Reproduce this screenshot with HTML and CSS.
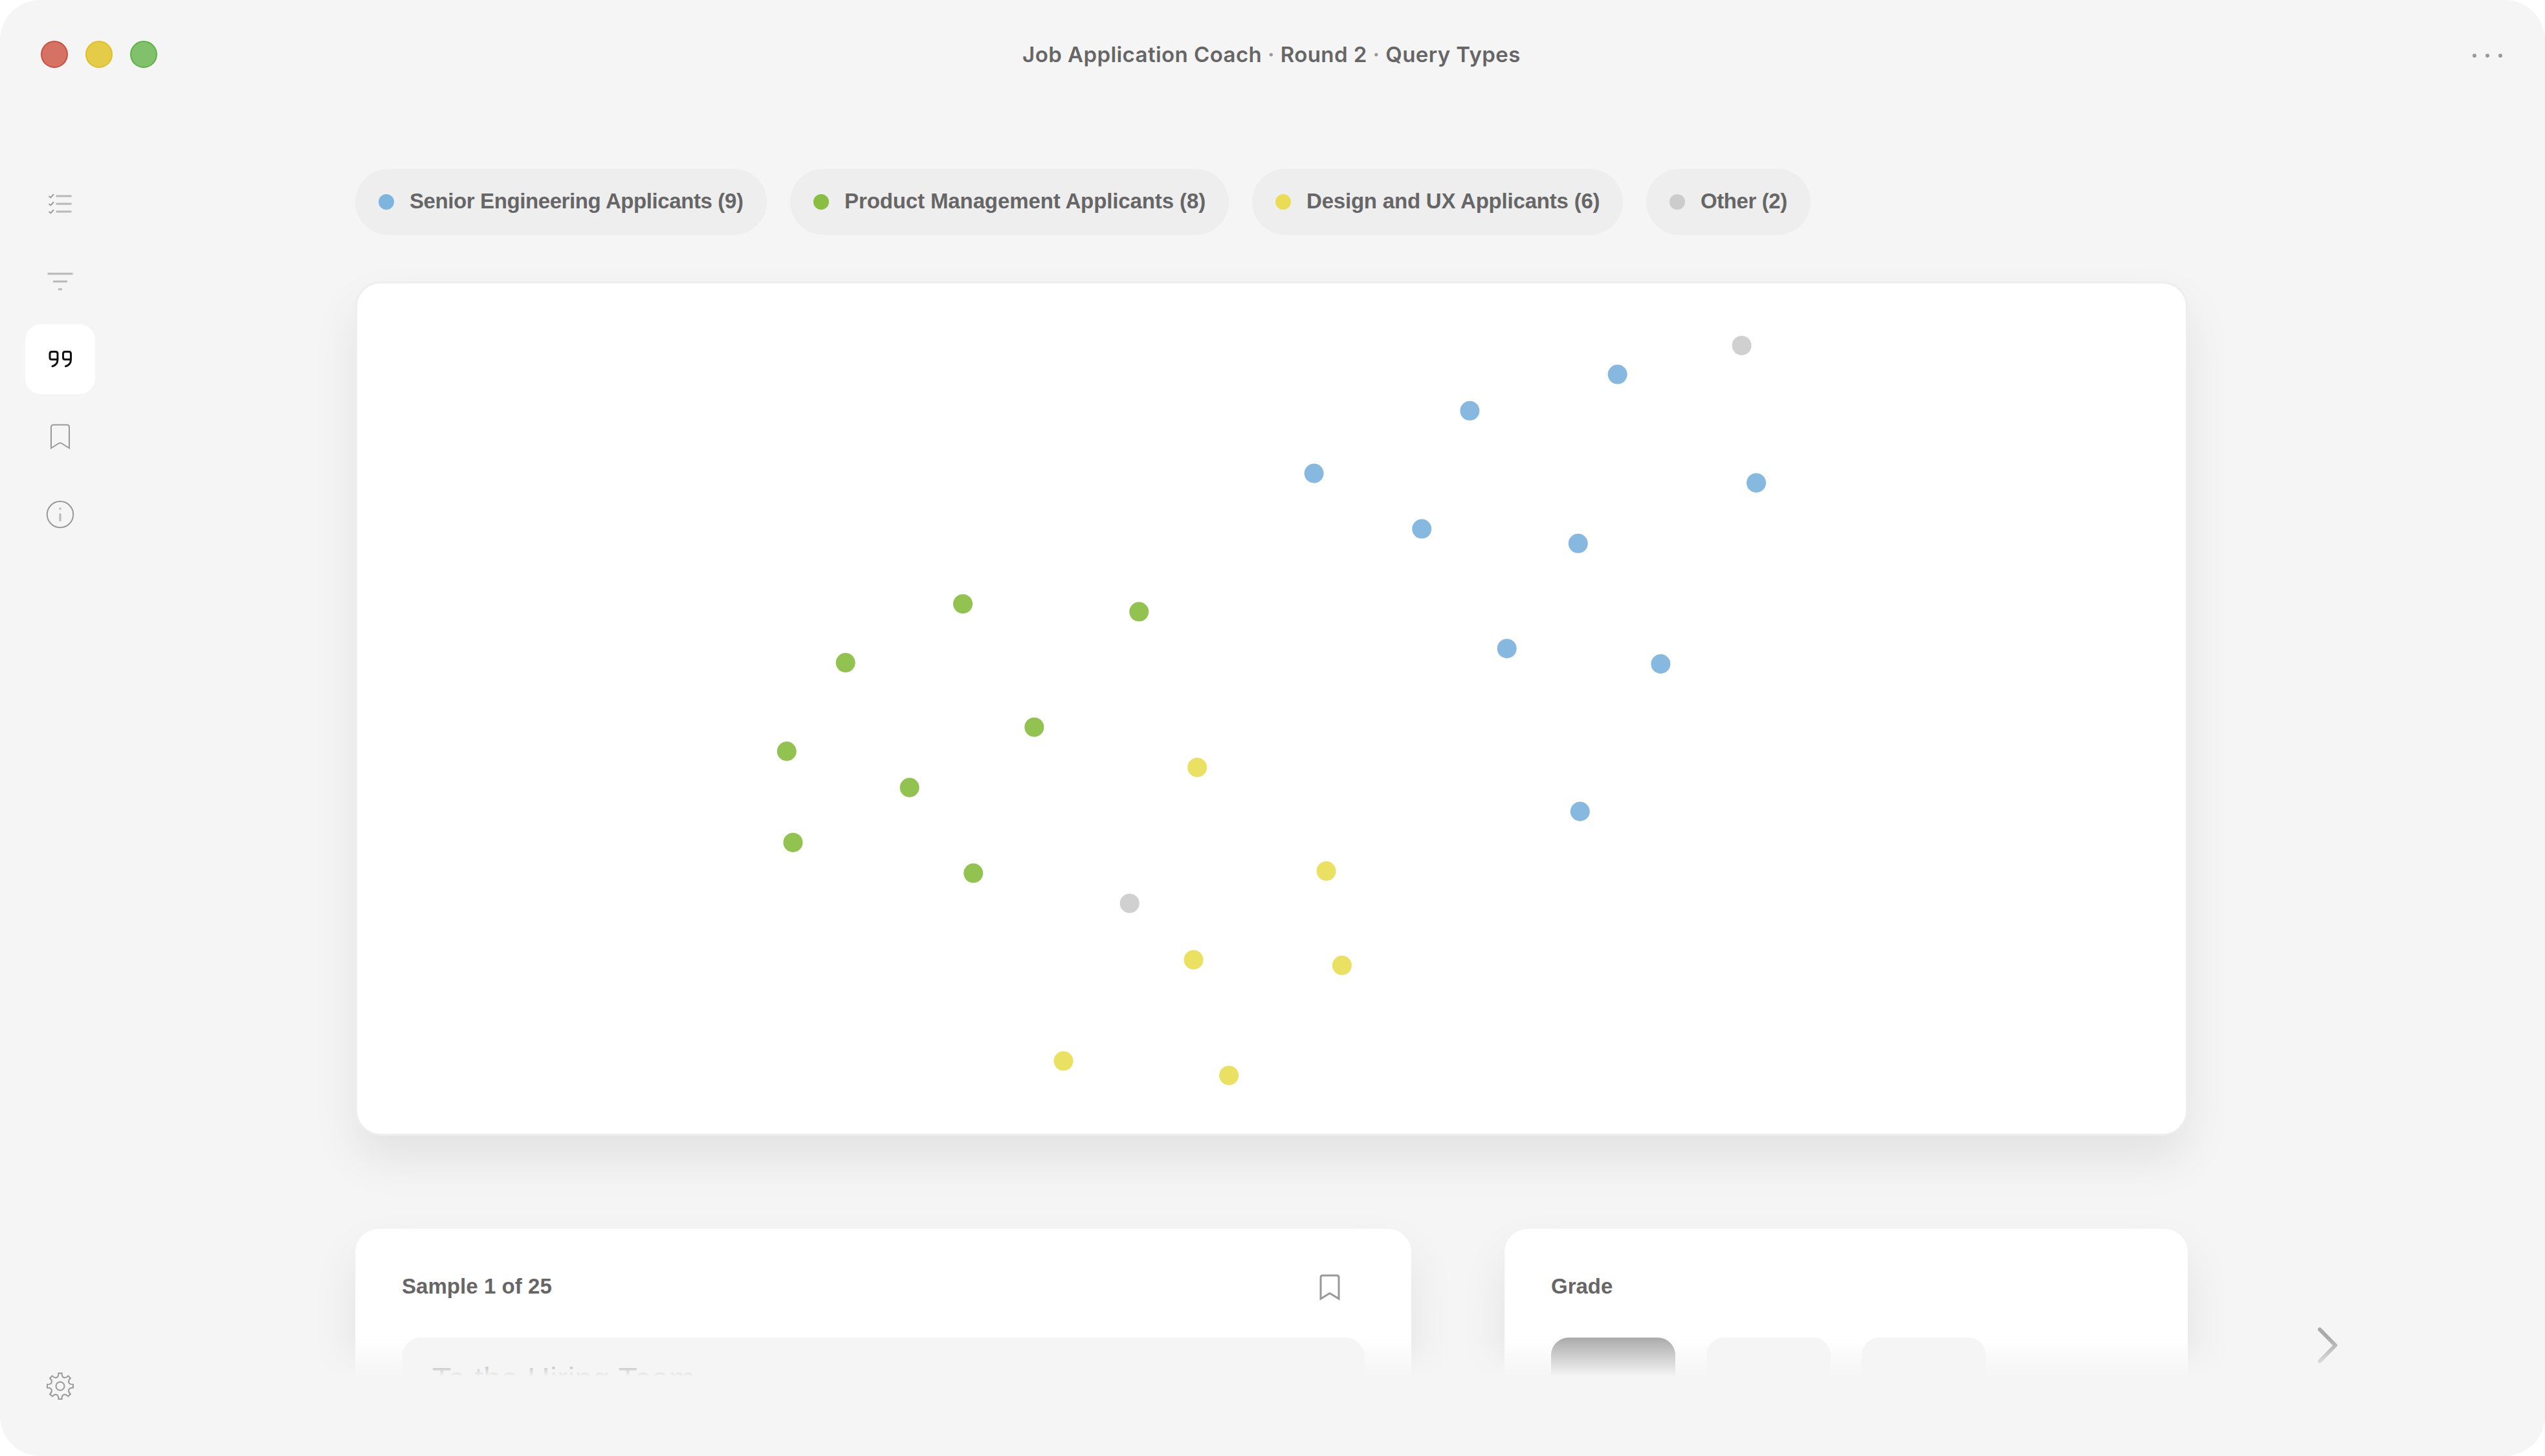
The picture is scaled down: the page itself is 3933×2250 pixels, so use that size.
FILE: index.html
```html
<!DOCTYPE html>
<html lang="en">
<head>
<meta charset="utf-8">
<title>Job Application Coach</title>
<link rel="stylesheet" href="styles.css">
</head>
<body>
<div class="window">
  <header class="titlebar">
    <div class="lights">
      <span class="light light-close"></span>
      <span class="light light-min"></span>
      <span class="light light-max"></span>
    </div>
    <h1 class="title">Job Application Coach <span class="sep">·</span> Round 2 <span class="sep">·</span> Query Types</h1>
    <div class="more"><span class="more-dot"></span><span class="more-dot"></span><span class="more-dot"></span></div>
  </header>
  <div class="body">
    <nav class="sidebar">
      <a class="nav-item">
        <svg class="icon" viewBox="0 0 48 48"><path class="soft" d="M38 12h24M38 24h24M38 36h24" transform="translate(-20.5 0)"/><path class="thin" d="M6.5 12l3 2.2 4.5-5M6.5 24l3 2.2 4.5-5M6.5 36l3 2.2 4.5-5"/></svg>
      </a>
      <a class="nav-item">
        <svg class="icon" viewBox="0 0 48 48"><path class="soft" d="M4.5 12h39M13 24h22M21 36h6"/></svg>
      </a>
      <a class="nav-item active">
        <svg class="icon" viewBox="0 0 48 48"><path class="bold" d="M20 24.5h-9c-2 0-3-1-3-3V15.500c0-2 1-3 3-3h6c2 0 3 1 3 3V24.500c0 5-2.500 9-8 10.500M40.500 24.500h-9c-2 0-3-1-3-3V15.500c0-2 1-3 3-3h6c2 0 3 1 3 3V24.500c0 5-2.500 9-8 10.500"/></svg>
      </a>
      <a class="nav-item">
        <svg class="icon" viewBox="0 0 48 48"><path class="thin" d="M10 41.500V9c0-2 1.500-3.500 3.500-3.500h21c2 0 3.500 1.500 3.500 3.500v32.500l-12-7.500q-2-1.200-4 0z"/></svg>
      </a>
      <a class="nav-item">
        <svg class="icon" viewBox="0 0 48 48"><circle class="thin" cx="24" cy="24" r="20.200"/><path class="soft" d="M24 22.500v12M24 13.500v3"/></svg>
      </a>
      <a class="nav-item settings">
        <svg class="icon" viewBox="0 0 48 48"><path class="gear" d="M21.500 4H26.500C26.500 8 28 10.600 30.500 10.900C33 11.200 34.600 10 36.300 8.100L39.900 11.700C37.800 13.400 36.800 15 37.100 17.500C37.400 20 40 21.500 44 21.500V26.500C40 26.500 37.400 28 37.100 30.500C36.800 33 37.800 34.600 39.900 36.300L36.300 39.900C34.600 38 33 36.800 30.500 37.100C28 37.400 26.500 40 26.500 44H21.500C21.500 40 20 37.400 17.500 37.100C15 36.800 13.400 38 11.700 39.900L8.100 36.300C10.200 34.600 11.200 33 10.900 30.500C10.600 28 8 26.500 4 26.500V21.500C8 21.500 10.600 20 10.900 17.500C11.200 15 10.200 13.400 8.100 11.700L11.700 8.100C13.400 10 15 11.200 17.500 10.900C20 10.600 21.500 8 21.500 4Z"/><circle class="gear" cx="24" cy="24" r="6.500"/></svg>
      </a>
    </nav>
    <main class="main">
      <div class="pills">
        <div class="pill pill-eng"><span class="dot blue"></span><span class="label">Senior Engineering Applicants (9)</span></div>
        <div class="pill pill-pm"><span class="dot green"></span><span class="label">Product Management Applicants (8)</span></div>
        <div class="pill pill-ux"><span class="dot yellow"></span><span class="label">Design and UX Applicants (6)</span></div>
        <div class="pill pill-other"><span class="dot grey"></span><span class="label">Other (2)</span></div>
      </div>
      <section class="map">
        <svg class="plot" viewBox="552 438 2826 1314">
          <g class="p-blue"><circle cx="2499.700" cy="578.600" r="15"/><circle cx="2271.400" cy="634.800" r="15"/><circle cx="2030.600" cy="731.500" r="15"/><circle cx="2714.100" cy="746.200" r="15"/><circle cx="2197.200" cy="817.300" r="15"/><circle cx="2438.800" cy="839.800" r="15"/><circle cx="2328.700" cy="1002.200" r="15"/><circle cx="2566.400" cy="1026" r="15"/><circle cx="2441.800" cy="1254" r="15"/></g>
          <g class="p-green"><circle cx="1488" cy="933.200" r="15"/><circle cx="1760.200" cy="945.300" r="15"/><circle cx="1306.700" cy="1024.100" r="15"/><circle cx="1598.300" cy="1123.700" r="15"/><circle cx="1215.800" cy="1161" r="15"/><circle cx="1405.600" cy="1217" r="15"/><circle cx="1225.500" cy="1301.900" r="15"/><circle cx="1504.200" cy="1349.300" r="15"/></g>
          <g class="p-yellow"><circle cx="1850.200" cy="1185.900" r="15"/><circle cx="2049.600" cy="1346.100" r="15"/><circle cx="1844.500" cy="1483.200" r="15"/><circle cx="2073.900" cy="1491.800" r="15"/><circle cx="1643.500" cy="1639.600" r="15"/><circle cx="1899.100" cy="1661.900" r="15"/></g>
          <g class="p-grey"><circle cx="1745.700" cy="1395.900" r="15"/><circle cx="2691.600" cy="533.900" r="15"/></g>
        </svg>
      </section>
      <div class="row">
        <section class="card sample">
          <div class="card-head">
            <h2 class="heading heading-sample">Sample 1 of 25</h2>
            <svg class="bookmark" viewBox="0 0 36 42"><path d="M4 39V6c0-2 1-3 3-3h22c2 0 3 1 3 3v33L18 30.500z"/></svg>
          </div>
          <div class="letter">To the Hiring Team,</div>
        </section>
        <section class="card grade">
          <div class="card-head"><h2 class="heading">Grade</h2></div>
          <div class="grades"><div class="grade-box selected"></div><div class="grade-box"></div><div class="grade-box"></div></div>
        </section>
        <svg class="next" viewBox="0 0 36 60"><path d="M6 5.500L30 30 6 54.500"/></svg>
      </div>
      <div class="fade"></div>
    </main>
  </div>
</div>
</body>
</html>
```

FILE: styles.css
```css
* { box-sizing: border-box; }

body {
  margin: 0;
  background: #fff;
  font-family: "Liberation Sans", Arial, sans-serif;
  color: #666;
}

.window {
  width: 3933px;
  height: 2250px;
  background: #f5f5f5;
  border-radius: 62px;
  overflow: hidden;
}

.titlebar {
  height: 168px;
  padding: 0 66px 0 63px;
  display: grid;
  grid-template-columns: 1fr auto 1fr;
  align-items: center;
}

.lights { display: flex; gap: 27px; }
.light { width: 42px; height: 42px; border-radius: 50%; border: 2px solid; }
.light-close { background: #d57263; border-color: #cb4f3f; }
.light-min { background: #e5cc48; border-color: #dfbf26; }
.light-max { background: #81c16b; border-color: #5eb146; }

.title {
  margin: 0;
  font: 600 33px/42px Inter, sans-serif;
  letter-spacing: 0.430px;
  white-space: nowrap;
}
.sep { color: #999; }

.more { display: flex; justify-content: flex-end; gap: 14px; padding-top: 3px; }
.more-dot { width: 6px; height: 6px; border-radius: 50%; background: #999; }

.body { display: flex; height: 2082px; }

.sidebar {
  width: 186px;
  padding: 93px 0 54px 39px;
  display: flex;
  flex-direction: column;
  gap: 12px;
}
.nav-item {
  width: 108px;
  height: 108px;
  border-radius: 24px;
  display: flex;
  align-items: center;
  justify-content: center;
}
.active { background: #fff; }
.settings { margin-top: auto; }
.icon { width: 48px; height: 48px; fill: none; }
.soft { stroke: #b8b8b8; stroke-width: 3; }
.thin { stroke: #999; stroke-width: 2; }
.bold { stroke: #111; stroke-width: 3; stroke-linecap: round; }
.gear { stroke: #999; stroke-width: 2; }

.main {
  position: relative;
  flex: 1;
  height: 1959px;
  padding: 93px 0 0 363px;
  overflow: hidden;
}

.pills { display: flex; gap: 36px; }
.pill {
  height: 102px;
  padding: 0 36px;
  border-radius: 51px;
  background: #eee;
  display: flex;
  align-items: center;
  gap: 24px;
  font-size: 33px;
  font-weight: 700;
  white-space: nowrap;
}
.label { padding-bottom: 2px; }
.pill-eng { width: 636px; letter-spacing: -0.400px; }
.pill-pm { width: 678px; letter-spacing: -0.110px; }
.pill-ux { width: 573px; letter-spacing: -0.200px; }
.pill-other { width: 254px; letter-spacing: -0.400px; }
.dot { width: 24px; height: 24px; border-radius: 50%; flex: none; }
.blue { background: #7eb5df; }
.green { background: #8abe42; }
.yellow { background: #eadd55; }
.grey { background: #ccc; }

.map {
  width: 2832px;
  height: 1320px;
  margin-top: 72px;
  border: 3px solid #eee;
  border-radius: 39px;
  background: #fff;
  box-shadow: 0 36px 72px rgba(0, 0, 0, 0.080);
}
.plot { display: block; width: 2826px; height: 1314px; }
.p-blue { fill: #86b8e0; }
.p-green { fill: #92c250; }
.p-yellow { fill: #eae163; }
.p-grey { fill: #d0d0d0; }

.row { display: flex; align-items: flex-start; margin-top: 144px; }
.card {
  height: 600px;
  padding: 0 72px;
  border-radius: 36px;
  background: #fff;
  box-shadow: 0 36px 72px rgba(0, 0, 0, 0.080);
}
.sample { width: 1632px; }
.grade { width: 1056px; margin-left: 144px; }
.card-head {
  height: 168px;
  padding: 12px 36px 0 0;
  display: flex;
  align-items: center;
  justify-content: space-between;
}
.heading {
  margin: 0;
  padding-bottom: 2px;
  font-size: 33px;
  line-height: 42px;
  font-weight: 700;
  letter-spacing: 0;
  white-space: nowrap;
}
.heading-sample { letter-spacing: 0.050px; }
.bookmark { width: 36px; height: 42px; fill: none; stroke: #999; stroke-width: 3; }

.letter {
  height: 400px;
  padding: 34px 47px;
  border-radius: 30px;
  background: #f5f5f5;
  color: #444;
  font-size: 48px;
  line-height: 60px;
  letter-spacing: 0.400px;
}
.grades { display: flex; gap: 48px; }
.grade-box { width: 192px; height: 192px; border-radius: 27px; background: #f5f5f5; }
.selected { background: #aaa; }

.next {
  width: 36px;
  height: 60px;
  margin: 150px 0 0 198px;
  fill: none;
  stroke: #aaa;
  stroke-width: 6;
  stroke-linecap: round;
  stroke-linejoin: round;
}

/* Scroll fade over the bottom edge of the content */
.fade {
  position: absolute;
  left: 0;
  right: 0;
  bottom: 0;
  height: 60px;
  background: linear-gradient(rgba(245, 245, 245, 0), #f5f5f5);
}
```
